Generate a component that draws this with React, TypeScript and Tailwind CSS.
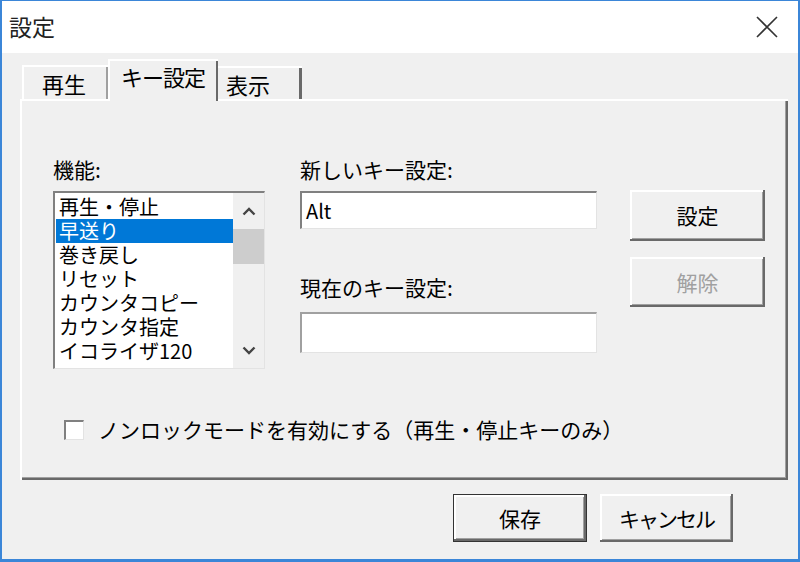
import React from "react";

const font = { fontFamily: '"Noto Sans CJK JP", "Noto Sans", sans-serif' };

const items = ["再生・停止", "早送り", "巻き戻し", "リセット", "カウンタコピー", "カウンタ指定", "イコライザ120"];

function Btn({ children, disabled, primary, className }: { children: React.ReactNode; disabled?: boolean; primary?: boolean; className?: string }) {
  return (
    <div
      className={
        "flex items-center justify-center bg-[#f0f0f0] text-[21px] leading-none " +
        (primary
          ? "border border-[#333] shadow-[inset_-2px_-2px_0_#696969,inset_2px_2px_0_#ffffff,inset_-3px_-3px_0_#a0a0a0] "
          : "shadow-[inset_-2px_-2px_0_#696969,inset_2px_2px_0_#ffffff,inset_-3px_-3px_0_#a0a0a0] ") +
        (disabled ? "text-[#a0a0a0] " : "text-black ") +
        (className || "")
      }
    >
      {children}
    </div>
  );
}

export default function App() {
  return (
    <div style={font} className="w-[800px] h-[562px] flex flex-col border-x-2 border-b-[3px] border-t border-[#3b86d8] overflow-hidden">
      {/* title bar */}
      <div className="h-[52px] bg-white flex items-center justify-between pl-[7px] pr-[20px] shrink-0">
        <span className="text-[23px] text-[#222] leading-none mb-[2px]">設定</span>
        <svg width="22" height="22" viewBox="0 0 22 22" className="mb-[1px]">
          <path d="M1 1L21 21M21 1L1 21" stroke="#333" strokeWidth="1.6" />
        </svg>
      </div>

      <div className="flex-1 bg-[#f0f0f0] pl-[18px] pr-[10px] flex flex-col">
        {/* tabs */}
        <div className="flex items-end h-[46px] pl-[2px] relative z-10">
          <div className="w-[86px] h-[34px] border-t-2 border-l-2 border-white shadow-[inset_-2px_0_0_#a0a0a0] flex items-center justify-center text-[22px] leading-none pr-[4px]">
            再生
          </div>
          <div className="w-[110px] h-[42px] -mb-[2px] bg-[#f0f0f0] border-t-2 border-l-2 border-white shadow-[inset_-2px_0_0_#696969] flex items-start pt-[4px] justify-center text-[22px] leading-none pr-[2px] tracking-[-1px]">
            キー設定
          </div>
          <div className="w-[84px] h-[33px] border-t-2 border-white shadow-[inset_-3px_0_0_#696969] flex items-center text-[22px] leading-none pl-[8px]">
            表示
          </div>
        </div>

        {/* panel */}
        <div className="h-[381px] border-t-2 border-l-2 border-white shadow-[inset_-2px_-2px_0_#696969,inset_-3px_-3px_0_#a0a0a0] pl-[31px] pt-[56px] text-[21px] leading-none">
          <div className="flex">
            {/* column 1 */}
            <div className="w-[212px] flex flex-col">
              <div className="h-[24px] flex items-center">機能:</div>
              <div className="mt-[10px] h-[178px] bg-white border-t-2 border-l-2 border-[#808080] border-b border-r border-b-[#e3e3e3] border-r-[#e3e3e3] flex">
                <div className="flex-1 flex flex-col pl-[1px] pt-[2px] text-[20px]">
                  {items.map((it, i) => (
                    <div
                      key={it}
                      className={
                        "h-[24px] leading-[20px] flex items-center pl-[3px] whitespace-nowrap " +
                        (i === 1 ? "bg-[#0078d7] text-white" : "text-black")
                      }
                    >
                      {it}
                    </div>
                  ))}
                </div>
                <div className="w-[31px] bg-[#f0f0f0] flex flex-col items-center">
                  <div className="h-[36px] flex items-center justify-center">
                    <svg width="14" height="9" viewBox="0 0 14 9">
                      <path d="M1.5 7.5L7 2L12.5 7.5" fill="none" stroke="#444" strokeWidth="2.4" />
                    </svg>
                  </div>
                  <div className="w-full h-[35px] bg-[#cdcdcd]" />
                  <div className="flex-1" />
                  <div className="h-[36px] flex items-center justify-center">
                    <svg width="14" height="9" viewBox="0 0 14 9">
                      <path d="M1.5 1.5L7 7L12.5 1.5" fill="none" stroke="#444" strokeWidth="2.4" />
                    </svg>
                  </div>
                </div>
              </div>
            </div>

            {/* column 2 */}
            <div className="w-[297px] ml-[35px] flex flex-col">
              <div className="h-[24px] flex items-center">新しいキー設定:</div>
              <div className="mt-[10px] h-[38px] bg-white border-t-2 border-l-2 border-[#808080] border-b border-r border-b-[#e3e3e3] border-r-[#e3e3e3] flex items-center pl-[4px] text-[20px]">
                Alt
              </div>
              <div className="mt-[46px] h-[24px] flex items-center">現在のキー設定:</div>
              <div className="mt-[13px] h-[41px] bg-white border-t-2 border-l-2 border-[#a0a0a0] border-b border-r border-b-[#e3e3e3] border-r-[#e3e3e3]" />
            </div>

            {/* column 3 */}
            <div className="w-[135px] ml-[33px] flex flex-col pt-[33px]">
              <Btn className="h-[51px]">設定</Btn>
              <Btn disabled className="h-[50px] mt-[16px]">解除</Btn>
            </div>
          </div>

          <div className="mt-[50px] ml-[11px] flex items-center">
            <div className="w-[20px] h-[20px] bg-white border-t-2 border-l-2 border-[#808080] border-b border-r border-b-[#e3e3e3] border-r-[#e3e3e3]" />
            <span className="ml-[14px]">ノンロックモードを有効にする（再生・停止キーのみ）</span>
          </div>
        </div>

        {/* bottom buttons */}
        <div className="flex justify-end gap-[13px] mt-[14px] pr-[55px]">
          <Btn primary className="w-[134px] h-[48px]">保存</Btn>
          <Btn className="w-[133px] h-[48px] tracking-[-2px] text-[20px]">キャンセル</Btn>
        </div>
      </div>
    </div>
  );
}
